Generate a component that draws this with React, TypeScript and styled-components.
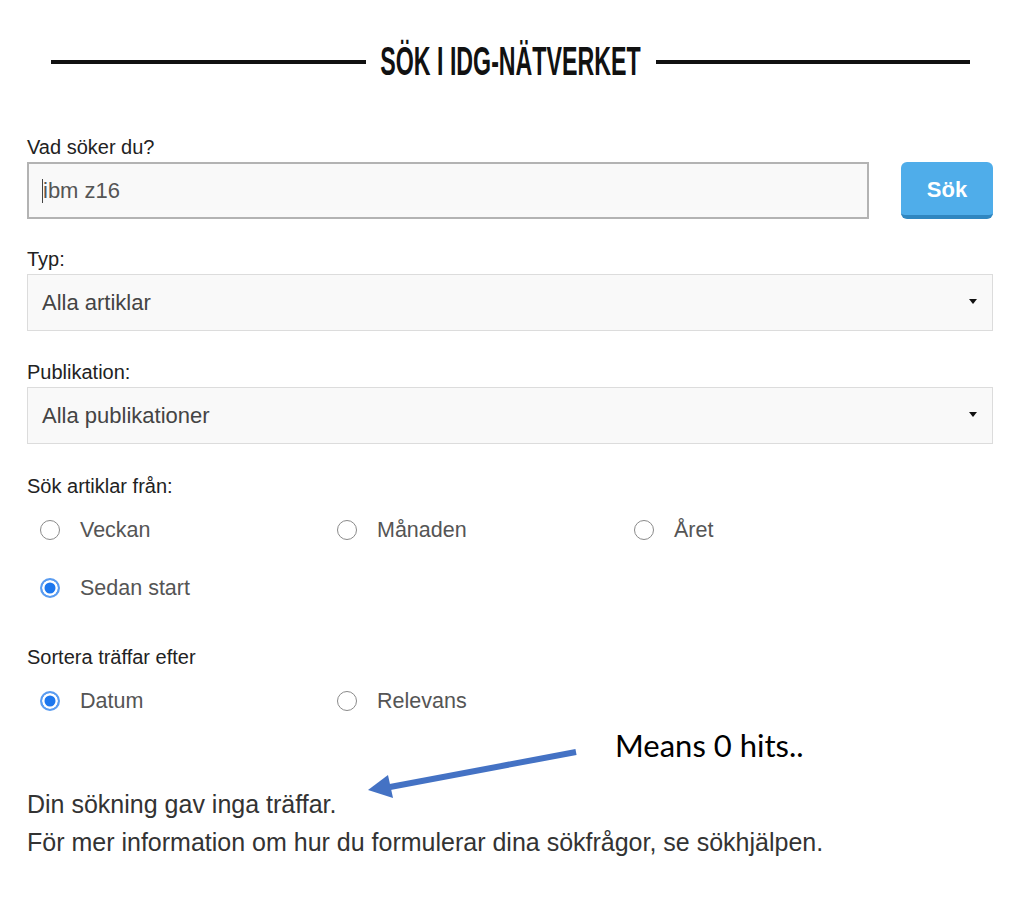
import styled, { createGlobalStyle } from "styled-components";

const GlobalStyle = createGlobalStyle`
  html, body {
    margin: 0;
    padding: 0;
    background: #ffffff;
  }
  body {
    font-family: "Liberation Sans", Arial, sans-serif;
  }
`

const Page = styled.div`
  position: relative;
  width: 1024px;
  height: 911px;
  background: #fff;
  padding-top: 39px;
  box-sizing: border-box;
`

const TitleRow = styled.div`
  display: flex;
  align-items: center;
  padding: 0 54px 0 51px;
  height: 44px;
`

const TitleLine = styled.div`
  flex: 1;
  height: 4px;
  background: #111;
  margin-top: 1px;
`

const TitleBox = styled.div`
  width: 260px;
  margin: 0 15px;
  display: flex;
  justify-content: center;
  overflow: visible;
`

const TitleText = styled.h1`
  margin: 0;
  white-space: nowrap;
  font-family: "Liberation Sans", Arial, sans-serif;
  font-weight: 700;
  font-size: 40px;
  line-height: 44px;
  color: #111;
  transform: scaleX(0.58);
`

const Form = styled.form`
  margin: 0;
  padding: 53px 31px 0 27px;
`

const Field = styled.div<{ $top: number }>`
  margin-top: ${p => p.$top}px;
`

const Label = styled.div`
  font-size: 20px;
  line-height: 22px;
  color: #222;
  margin-bottom: 4px;
`

const SearchRow = styled.div`
  display: flex;
  gap: 32px;
`

const TextBox = styled.div`
  flex: 1;
  height: 57px;
  box-sizing: border-box;
  border: 2px solid #b3b3b3;
  background: #f9f9f9;
  display: flex;
  align-items: center;
  padding-left: 13px;
  font-size: 22px;
  color: #555;
`

const Caret = styled.span`
  display: inline-block;
  width: 1px;
  height: 24px;
  background: #444;
`

const SearchButton = styled.button`
  width: 92px;
  height: 57px;
  box-sizing: border-box;
  border: none;
  border-bottom: 4px solid #2f86c0;
  border-radius: 6px;
  background: #4fadea;
  color: #fff;
  font-family: "Liberation Sans", Arial, sans-serif;
  font-weight: 700;
  font-size: 22px;
  padding: 2px 0 0;
`

const Select = styled.div`
  height: 57px;
  box-sizing: border-box;
  border: 1px solid #dcdcdc;
  background: #f9f9f9;
  display: flex;
  align-items: center;
  justify-content: space-between;
  padding: 0 15px 0 14px;
  font-size: 22px;
  color: #444;
`

const SelectArrow = styled.span`
  width: 0;
  height: 0;
  border-left: 4px solid transparent;
  border-right: 4px solid transparent;
  border-top: 5px solid #111;
  margin-top: -2px;
`

const RadioGrid = styled.div`
  display: grid;
  grid-template-columns: 297px 297px 297px;
  grid-auto-rows: 58px;
  margin-top: 1px;
`

const RadioItem = styled.label`
  display: flex;
  align-items: center;
  gap: 20px;
  padding-left: 13px;
  font-size: 21.5px;
  color: #555;
`

const RadioDot = styled.span<{ $checked?: boolean }>`
  width: 20px;
  height: 20px;
  box-sizing: border-box;
  border-radius: 50%;
  border: ${p => (p.$checked ? "2px solid #5a9cf0" : "1.5px solid #8a8a8a")};
  background: ${p => (p.$checked ? "#1d77ee" : "#fff")};
  box-shadow: ${p => (p.$checked ? "inset 0 0 0 2.5px #fff" : "none")};
`

const Result = styled.div`
  margin-top: 55px;
  font-size: 25px;
  line-height: 38px;
  color: #333;
`

const Note = styled.div`
  position: absolute;
  left: 615px;
  top: 726px;
  font-family: Lato, "Open Sans", sans-serif;
  font-size: 31px;
  line-height: 38px;
  color: #000;
`

const ArrowSvg = styled.svg`
  position: absolute;
  left: 360px;
  top: 735px;
`

type Opt = { label: string, checked?: boolean }

const RadioGroup = ({ options }: { options: Opt[] }) => (
  <RadioGrid>
    {options.map(o => (
      <RadioItem key={o.label}>
        <RadioDot $checked={o.checked} />
        {o.label}
      </RadioItem>
    ))}
  </RadioGrid>
)

export default function App() {
  return <Page>
    <GlobalStyle />
    <TitleRow>
      <TitleLine />
      <TitleBox>
        <TitleText>SÖK I IDG-NÄTVERKET</TitleText>
      </TitleBox>
      <TitleLine />
    </TitleRow>

    <Form onSubmit={e => e.preventDefault()}>
      <Field $top={0}>
        <Label>Vad söker du?</Label>
        <SearchRow>
          <TextBox><Caret />ibm z16</TextBox>
          <SearchButton type="submit">Sök</SearchButton>
        </SearchRow>
      </Field>

      <Field $top={29}>
        <Label>Typ:</Label>
        <Select>Alla artiklar<SelectArrow /></Select>
      </Field>

      <Field $top={30}>
        <Label>Publikation:</Label>
        <Select>Alla publikationer<SelectArrow /></Select>
      </Field>

      <Field $top={31}>
        <Label>Sök artiklar från:</Label>
        <RadioGroup options={[
          { label: "Veckan" },
          { label: "Månaden" },
          { label: "Året" },
          { label: "Sedan start", checked: true }
        ]} />
      </Field>

      <Field $top={29}>
        <Label>Sortera träffar efter</Label>
        <RadioGroup options={[
          { label: "Datum", checked: true },
          { label: "Relevans" }
        ]} />
      </Field>

      <Result>
        <div>Din sökning gav inga träffar.</div>
        <div>För mer information om hur du formulerar dina sökfrågor, se sökhjälpen.</div>
      </Result>
    </Form>

    <Note>Means 0 hits..</Note>
    <ArrowSvg width="230" height="72" viewBox="0 0 230 72">
      <line x1="216" y1="17" x2="30" y2="52" stroke="#4472c4" strokeWidth="6" />
      <polygon points="8,55 28,40 33,63" fill="#4472c4" />
    </ArrowSvg>
  </Page>
}
